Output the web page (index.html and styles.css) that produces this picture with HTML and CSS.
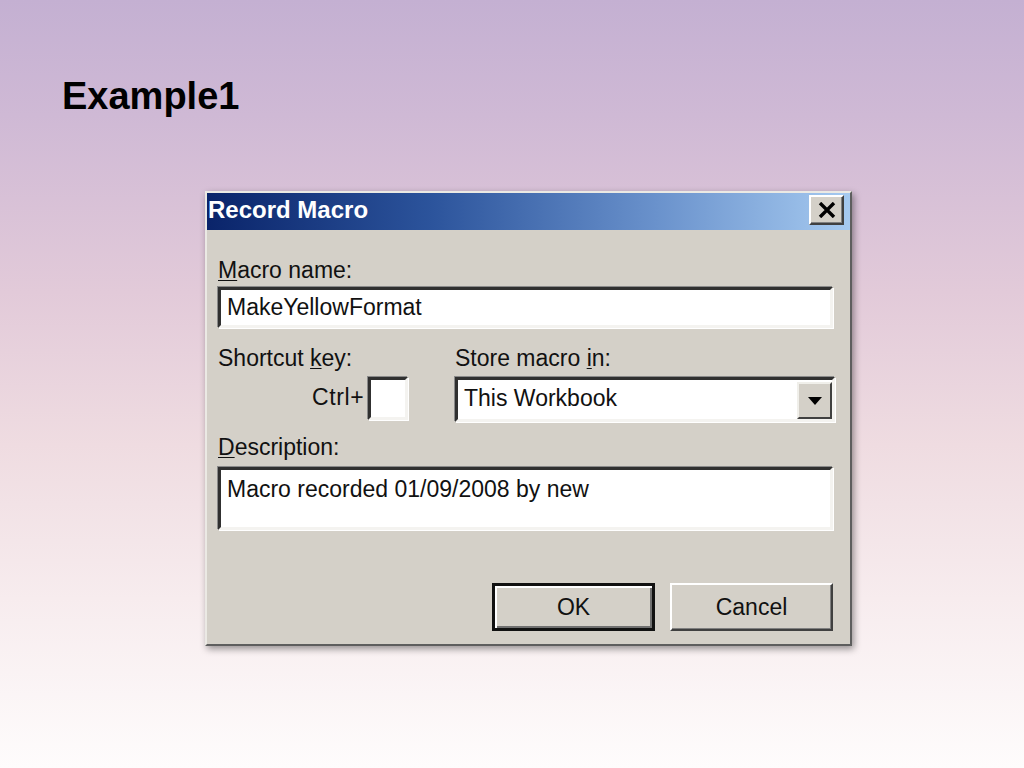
FILE: index.html
```html
<!DOCTYPE html>
<html lang="en">
<head>
  <meta charset="UTF-8" />
  <title>Example1</title>
  <link rel="stylesheet" href="styles.css">
</head>
<body>

  <h1 class="slide-title">Example1</h1>

  <div class="dialog">
    <div class="titlebar">
      <span class="caption">Record Macro</span>
      <button class="close-btn" aria-label="Close">
        <svg width="18" height="16" viewBox="0 0 18 16">
          <path d="M2 1 L16 15 M16 1 L2 15" stroke="#000" stroke-width="3.4" fill="none"/>
        </svg>
      </button>
    </div>

    <div class="dialog-body">
      <div class="lbl"><u>M</u>acro name:</div>
      <div class="field name-field">MakeYellowFormat</div>

      <div class="row">
        <div class="col-left">
          <div class="lbl">Shortcut <u>k</u>ey:</div>
          <div class="ctrl-row">
            <span>Ctrl+</span>
            <div class="field key-field"></div>
          </div>
        </div>
        <div class="col-right">
          <div class="lbl">Store macro <u>i</u>n:</div>
          <div class="field select-field">
            <span class="select-text">This Workbook</span>
            <span class="drop-btn">
              <svg width="14" height="8" viewBox="0 0 14 8"><path d="M0 0 H14 L7 8 Z" fill="#000"/></svg>
            </span>
          </div>
        </div>
      </div>

      <div class="lbl desc-lbl"><u>D</u>escription:</div>
      <div class="field desc-field">Macro recorded 01/09/2008 by new</div>

      <div class="buttons">
        <button class="btn btn-default">OK</button>
        <button class="btn">Cancel</button>
      </div>
    </div>
  </div>

</body>
</html>
```

FILE: styles.css
```css
* { box-sizing: border-box; }
html, body { height: 100%; }
body {
  margin: 0;
  padding: 0;
  overflow: hidden;
  background: linear-gradient(#c4b0d2 0%, #cfb9d5 15%, #e2cad9 38%, #efdce1 58%, #f7ecee 78%, #fefcfc 100%);
  font-family: "Liberation Sans", Arial, sans-serif;
}

.slide-title {
  margin: 77px 0 0 62px;
  font-size: 38px;
  line-height: 38px;
  font-weight: bold;
  color: #000;
}

.dialog {
  margin: 76px 0 0 205px;
  width: 647px;
  background: #d4d0c8;
  border: 2px solid;
  border-color: #ebe9e4 #5e5e5e #5e5e5e #ebe9e4;
  box-shadow: 2px 3px 7px rgba(0,0,0,.4);
}

.titlebar {
  height: 37px;
  display: flex;
  justify-content: space-between;
  align-items: flex-start;
  padding: 3px 6px 0 1px;
  background: linear-gradient(to right, #0a246a 0%, #2c549c 35%, #6a92cc 70%, #a6caf0 100%);
}
.caption {
  color: #fff;
  font-size: 24px;
  line-height: 27px;
  font-weight: bold;
}
.close-btn {
  width: 35px;
  height: 30px;
  margin-top: -1px;
  padding: 0;
  display: flex;
  align-items: center;
  justify-content: center;
  background: #d4d0c8;
  border: 2px solid;
  border-color: #fff #404040 #404040 #fff;
  box-shadow: inset -1px -1px 0 #808080;
}

.dialog-body {
  padding: 27px 17px 13px 11px;
  font-size: 23px;
  color: #111;
}
.lbl {
  line-height: 26px;
  height: 26px;
}
.lbl u { text-decoration-thickness: 1px; text-underline-offset: 2px; }

.field {
  background: #fff;
  border: 3px solid;
  border-color: #303030 #f4f3f0 #f4f3f0 #303030;
  box-shadow: -1px -1px 0 #8a8a8a, 1px 1px 0 #fff;
  line-height: 26px;
}
.name-field {
  margin-top: 4px;
  height: 41px;
  padding: 4px 6px;
}

.row {
  display: flex;
  margin-top: 17px;
}
.col-left { width: 237px; }
.col-right { flex: 1; }
.ctrl-row {
  display: flex;
  align-items: flex-end;
  margin: 6px 0 0 94px;
}
.ctrl-row span { line-height: 26px; padding-bottom: 10px; letter-spacing: 0.6px; }
.key-field {
  width: 40px;
  height: 43px;
  margin-left: 4px;
}
.select-field {
  margin-top: 6px;
  height: 45px;
  display: flex;
  align-items: flex-start;
  justify-content: space-between;
  padding: 5px 0 0 6px;
  margin-right: -2px;
}
.select-text { line-height: 26px; }
.drop-btn {
  width: 35px;
  height: 37px;
  margin: -3px 0 0 0;
  display: flex;
  align-items: center;
  justify-content: center;
  background: #d4d0c8;
  border: 2px solid;
  border-color: #f0efea #404040 #404040 #f0efea;
}

.desc-lbl { margin-top: 12px; }
.desc-field {
  margin-top: 7px;
  height: 63px;
  padding: 6px 6px;
}

.buttons {
  display: flex;
  justify-content: flex-end;
  gap: 15px;
  margin-top: 53px;
}
.btn {
  width: 163px;
  height: 48px;
  padding: 0;
  font-family: "Liberation Sans", Arial, sans-serif;
  font-size: 23px;
  color: #111;
  background: #d4d0c8;
  border: 2px solid;
  border-color: #fff #404040 #404040 #fff;
  box-shadow: inset -1px -1px 0 #808080;
}
.btn-default {
  border: 3px solid #111;
  box-shadow: inset 2px 2px 0 #fff, inset -2px -2px 0 #707070;
}
```
